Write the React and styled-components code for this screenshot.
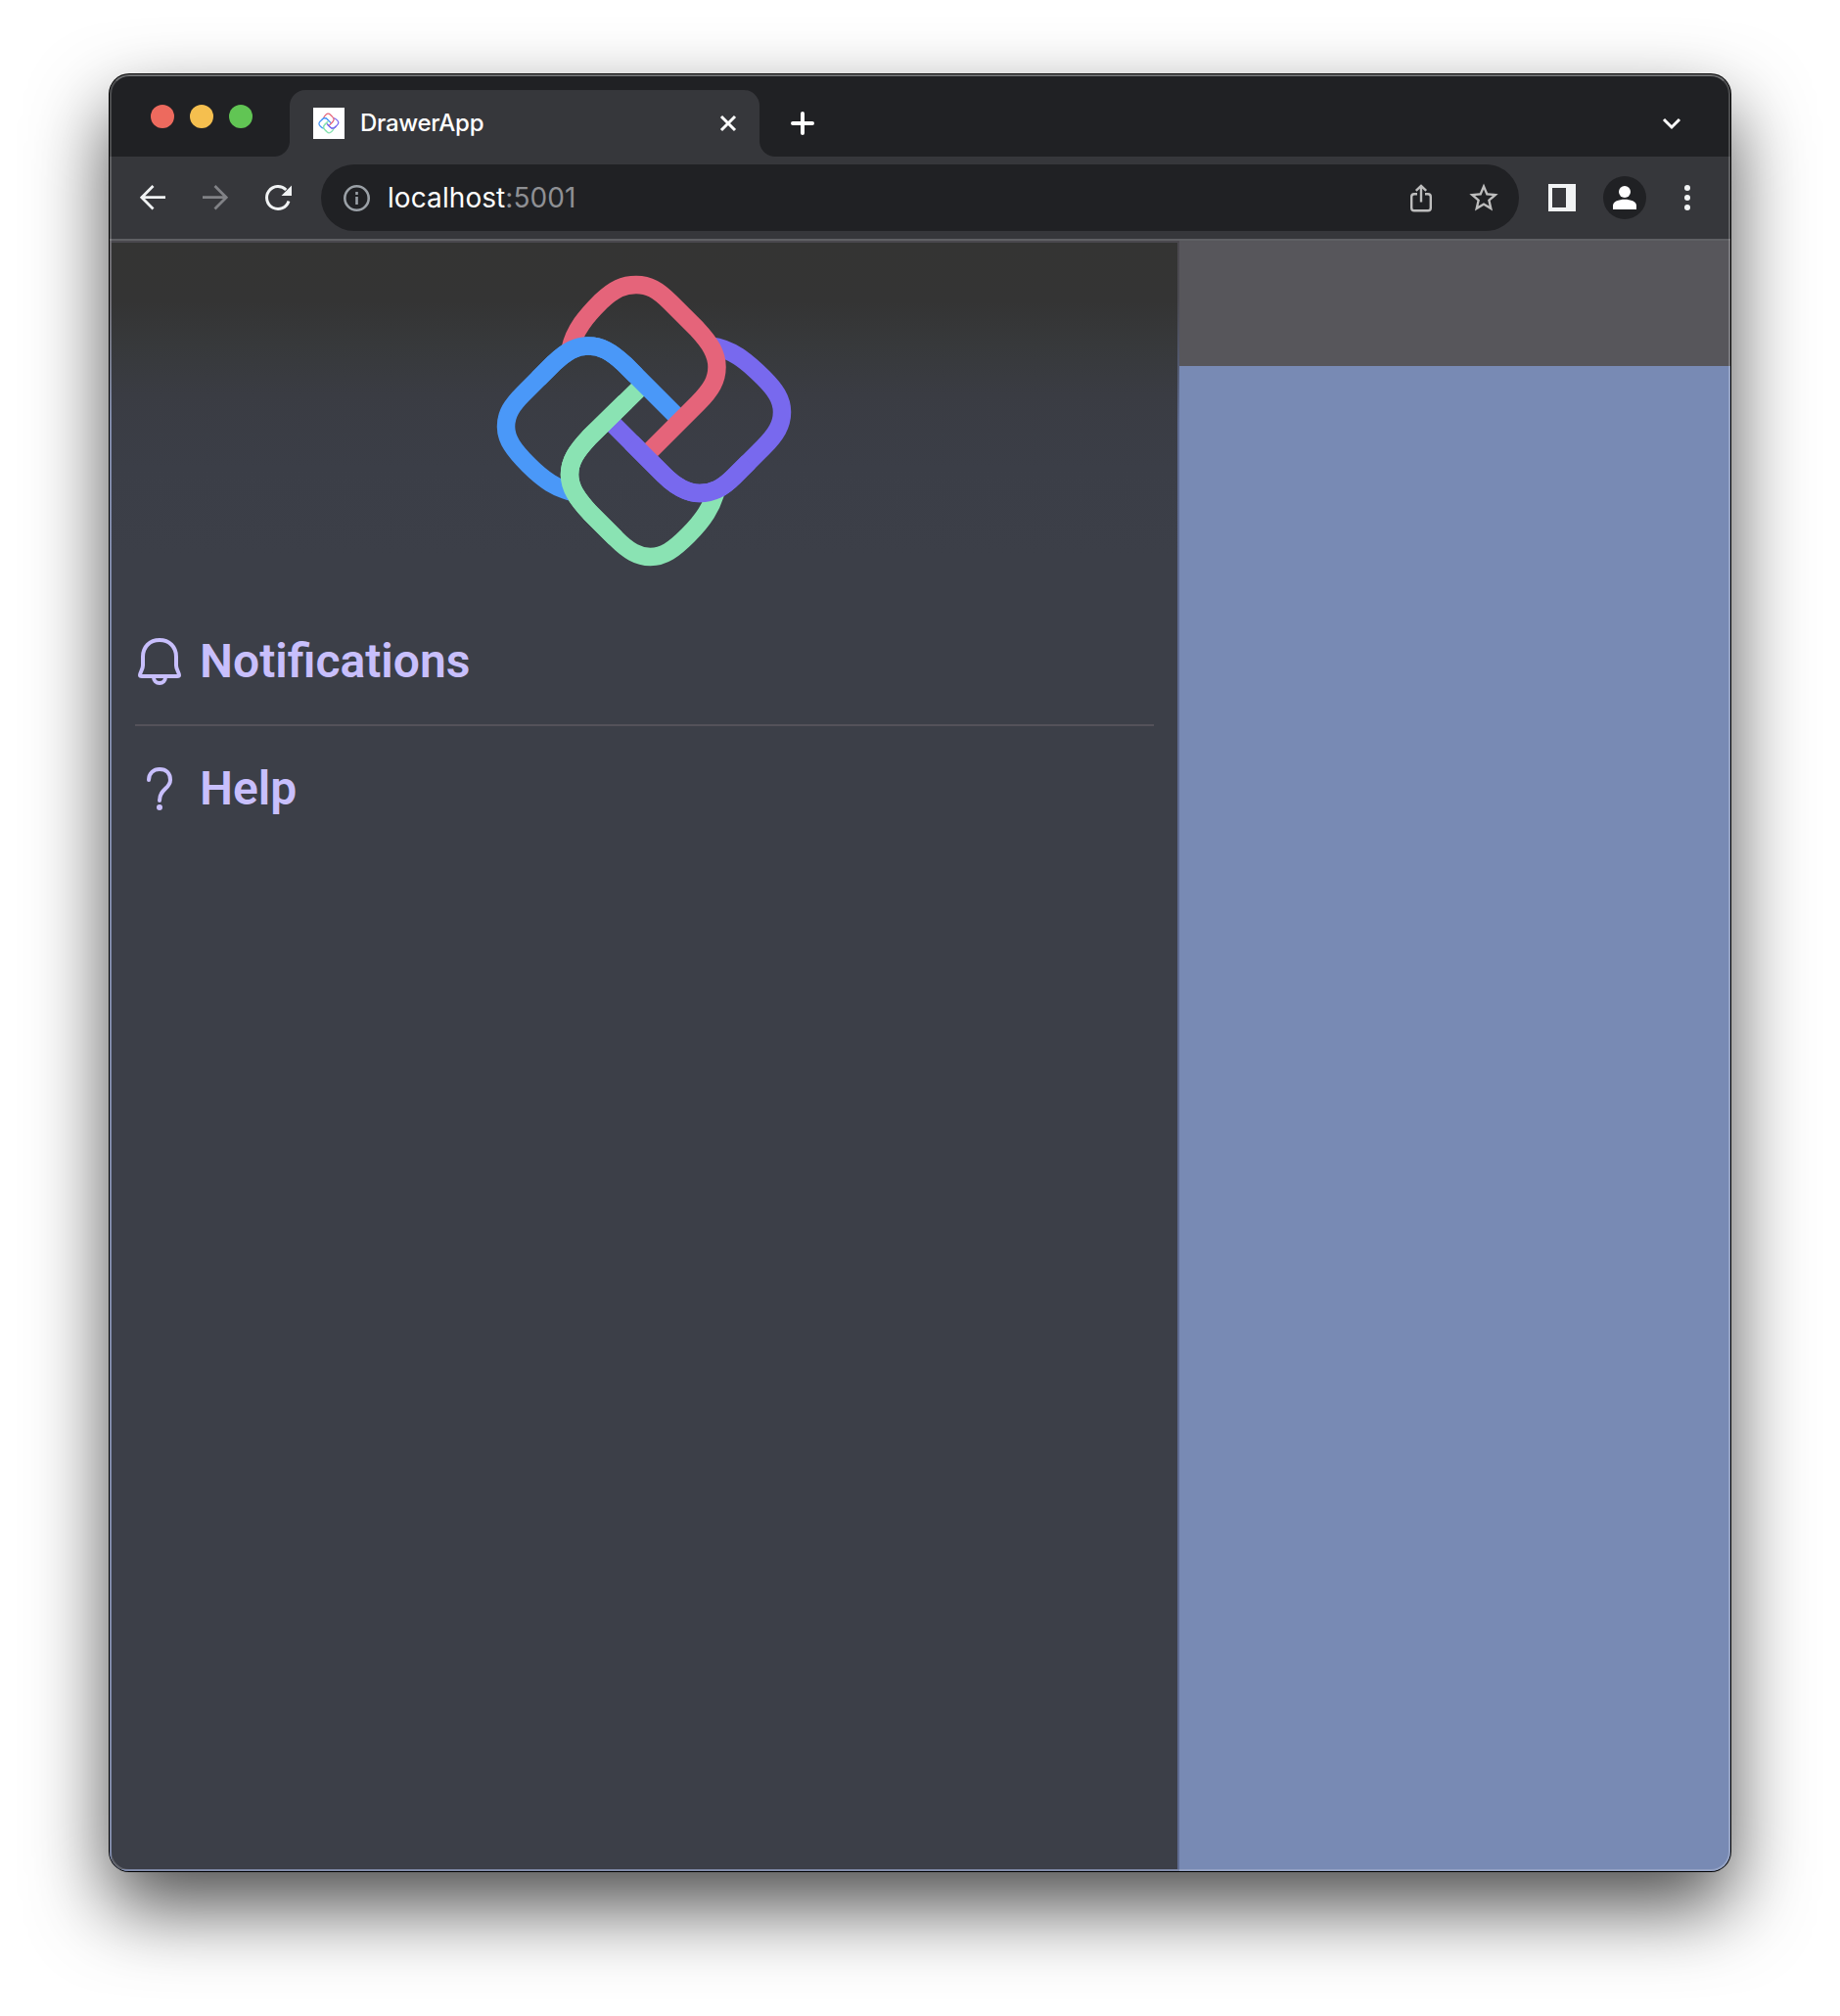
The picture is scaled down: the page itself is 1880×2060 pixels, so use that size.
import React from 'react';
import styled, { createGlobalStyle } from 'styled-components';

const Global = createGlobalStyle`
  *{box-sizing:border-box}
  body{margin:0;background:#fff;overflow:hidden}
`;
const Desktop = styled.main`
  width:1880px;height:2060px;padding:76px 112px 148px;background:#fff;
  font-family:Inter,sans-serif;
`;
const Frame = styled.div`
  position:relative;width:1656px;height:1836px;border-radius:20px;
  box-shadow:0 0 0 1px #000,0 36px 80px rgba(0,0,0,.7);
  display:flex;flex-direction:column;overflow:hidden;background:#36373b;
  &::after{content:'';position:absolute;inset:0;border:2px solid rgba(255,255,255,.2);border-top-color:rgba(255,255,255,.35);border-radius:20px;pointer-events:none}
`;
const TabStrip = styled.header`
  height:84px;flex:none;background:#202124;display:flex;align-items:flex-end;
`;
const Lights = styled.div`display:flex;gap:16px;width:184px;padding-left:42px;align-self:flex-start;padding-top:31px;`;
const Light = styled.i`width:24px;height:24px;border-radius:50%;background:${p => p.$color};`;
const Tab = styled.div`
  position:relative;width:480px;height:68px;background:#36373b;border-radius:16px 16px 0 0;
  display:flex;align-items:center;padding:0 23px 0 24px;color:#fff;
  &::before,&::after{content:'';position:absolute;bottom:0;width:16px;height:16px}
  &::before{right:100%;background:radial-gradient(circle at 0 0,transparent 15.5px,#36373b 16.5px)}
  &::after{left:100%;background:radial-gradient(circle at 100% 0,transparent 15.5px,#36373b 16.5px)}
`;
const Favicon = styled.span`width:32px;height:32px;background:#fff;display:flex;align-items:center;justify-content:center;`;
const TabTitle = styled.span`font-size:24px;font-weight:500;line-height:32px;margin-left:16px;flex:1;letter-spacing:-.28px;`;
const Icon = styled.svg`
  display:block;flex:none;width:${p => p.$w}px;height:${p => p.$h || p.$w}px;overflow:visible;
`;
const NewTab = styled.div`height:68px;width:88px;display:flex;align-items:center;justify-content:center;`;
const TabMenu = styled.div`margin-left:auto;height:68px;padding-right:51px;display:flex;align-items:center;`;
const Toolbar = styled.nav`
  height:86px;flex:none;border-bottom:2px solid #5f6064;display:flex;align-items:center;padding:0 28px;
`;
const NavButtons = styled.div`display:flex;gap:32px;width:188px;`;
const Address = styled.div`
  width:1224px;height:68px;border-radius:34px;background:#202124;display:flex;align-items:center;padding:0 20px 0 20px;
`;
const Url = styled.span`
  font-size:28px;line-height:36px;color:#fff;margin-left:16px;flex:1;letter-spacing:.08px;
  span{color:#8f9094}
`;
const AddressActions = styled.div`display:flex;gap:32px;`;
const Actions = styled.div`display:flex;align-items:center;gap:26px;margin-left:28px;`;
const Avatar = styled.div`width:44px;height:44px;border-radius:50%;background:#202124;display:flex;align-items:center;justify-content:center;`;
const Page = styled.section`flex:1;display:flex;background:#788ab4;`;
const Drawer = styled.aside`
  width:1093px;border:2px solid transparent;
  background:
    linear-gradient(180deg,#343433 0,#343434 60px,#37393b 105px,#3a3c43 155px,#3b3e47 230px,#3c3f48 320px) padding-box,
    linear-gradient(180deg,#4a484e 0,#4b4a51 60px,#535a70 125px,#5f6c92 185px) border-box;
  padding:12px 24px 0 24px;display:flex;flex-direction:column;
`;
const LogoBox = styled.div`display:flex;justify-content:center;height:351px;padding-left:2px;`;
const MenuItem = styled.a`
  height:${p => p.$last ? 128 : 131}px;padding-left:2px;display:flex;align-items:center;gap:18px;color:#c8bffc;
  font:600 48px/60px Roboto,sans-serif;
  border-bottom:${p => p.$last ? 0 : '2px solid #54525a'};
`;
const Content = styled.div`flex:1;`;
const AppBar = styled.div`height:128px;background:#57565b;`;

function Logo({ size = 340, thick = 18.5 }) {
  return (
    <Icon $w={size} viewBox="0 0 340 340" fill="none" strokeWidth={thick}>
      <path stroke="#7869ee" d="M236 93.500C257 96 273 109 290 126C302 138 309 148 309 161C309 174 303 184 290 197L260 227C248 239 238 244 225 244C212 244 201 238 188 225L137 174" />
      <path stroke="#8ae3b3" d="M242.500 238C238 258 228 272 213 287C198 302 188 309 174.500 309C162 309 152 303 139 290L113 264C99 249 92 238 92 225C92 211 99 201 112 187L164 136" />
      <path stroke="#4a98f8" d="M98 243.500C79 240 65 230 50 215C35 200 27 189 27 176C27 163 33 154 45 142L76 111C89 99 98 93.500 111 93.500C124 93.500 134 99 148 112L202 166" />
      <path stroke="#e5647a" d="M92.500 97C97 77 109 63 124 48C138 35 147 31 160 31C173 31 182 36 195 49L222 76C236 91 242.500 102 242.500 115C242.500 128 237 138 223 152L172 203" />
      <path stroke="#4a98f8" d="M60 127L76 111C89 99 98 93.500 111 93.500C124 93.500 134 99 148 112L160 124" />
      <path stroke="#7869ee" d="M275 212L260 227C248 239 238 244 225 244C212 244 201 238 188 225L155 192" />
      <path stroke="#8ae3b3" d="M139 290L113 264C99 249 92 238 92 225C92 211 99 201 112 187L149 150.500" />
    </Icon>
  );
}
const Arrow = ({ forward }) => (
  <Icon $w={32} viewBox="0 0 32 32" fill="none" stroke={forward ? '#818286' : '#f1f3f4'} strokeWidth="2.800">
    <path d={forward ? 'M3 15.700H28M15.500 4L27.200 15.700L15.500 27.400' : 'M29 15.700H4M16.500 4L4.800 15.700L16.500 27.400'} />
  </Icon>
);

export default function App() {
  return (
    <Desktop>
      <Global />
      <Frame>
        <TabStrip>
          <Lights>
            <Light $color="#ed6a5e" /><Light $color="#f5bf4f" /><Light $color="#61c554" />
          </Lights>
          <Tab>
            <Favicon><Logo size={24} thick={18} /></Favicon>
            <TabTitle>DrawerApp</TabTitle>
            <Icon $w={18} viewBox="0 0 18 18" stroke="#fff" strokeWidth="3"><path d="M2 2L16 16M16 2L2 16" /></Icon>
          </Tab>
          <NewTab>
            <Icon $w={24} viewBox="0 0 24 24" stroke="#fff" strokeWidth="4" strokeLinecap="round"><path d="M12 2V22M2 12H22" /></Icon>
          </NewTab>
          <TabMenu>
            <Icon $w={18} $h={12} viewBox="0 0 18 12" fill="none" stroke="#fff" strokeWidth="3"><path d="M1 2L9 10L17 2" /></Icon>
          </TabMenu>
        </TabStrip>
        <Toolbar>
          <NavButtons>
            <Arrow /><Arrow forward />
            <Icon $w={32} viewBox="0 0 32 32" fill="none" stroke="#f1f3f4" strokeWidth="3">
              <path d="M27 19.500A11.500 11.500 0 1 1 24.300 8" />
              <path d="M30 3.500V14H19.500Z" fill="#f1f3f4" stroke="none" />
            </Icon>
          </NavButtons>
          <Address>
            <Icon $w={32} viewBox="0 0 32 32" fill="none" stroke="#9aa0a6" strokeWidth="2.600">
              <circle cx="16.500" cy="16.500" r="12.200" /><path d="M16.500 15V23M16.500 10V13" />
            </Icon>
            <Url>localhost<span>:5001</span></Url>
            <AddressActions>
              <Icon $w={32} viewBox="0 0 32 32" fill="none" stroke="#bdbdbd" strokeWidth="2.400">
                <path d="M12 12.200H9Q6.200 12.200 6.200 15V26.500Q6.200 29.300 9 29.300H23Q25.800 29.300 25.800 26.500V15Q25.800 12.200 23 12.200H20M16 20.500V4M10.800 8.800L16 3.800L21.200 8.800" />
              </Icon>
              <Icon $w={32} viewBox="0 0 32 32" fill="#bdbdbd">
                <path transform="translate(-1.600 -1.400) scale(1.467)" d="M22 9.240l-7.190-.620L12 2 9.190 8.630 2 9.240l5.460 4.730L5.820 21 12 17.270 18.180 21l-1.630-7.030L22 9.240zM12 15.400l-3.760 2.270 1-4.280-3.320-2.880 4.380-.380L12 6.100l1.710 4.040 4.380.380-3.320 2.880 1 4.280L12 15.400z" />
              </Icon>
            </AddressActions>
          </Address>
          <Actions>
            <Icon $w={32} viewBox="0 0 32 32"><path fill="#f1f3f4" fillRule="evenodd" d="M2 2H30V30H2ZM6 6V26H20V6Z" /></Icon>
            <Avatar>
              <Icon $w={24} viewBox="0 0 24 24" fill="#fff"><circle cx="12" cy="6" r="6" /><path d="M0 24V20C0 11.500 24 11.500 24 20V24Z" /></Icon>
            </Avatar>
            <Icon $w={32} viewBox="0 0 32 32" fill="#f1f3f4"><circle cx="16" cy="6" r="3" /><circle cx="16" cy="16" r="3" /><circle cx="16" cy="26" r="3" /></Icon>
          </Actions>
        </Toolbar>
        <Page>
          <Drawer>
            <LogoBox><Logo /></LogoBox>
            <MenuItem>
              <Icon $w={46} $h={50} viewBox="0 0 46 50" fill="none" stroke="#c8bffc" strokeWidth="4" strokeLinejoin="round">
                <path d="M23 3C13 3 6 10 6 20V29C6 33 3 36 3 39C3 40 4 40 5 40H41C42 40 43 40 43 39C43 36 40 33 40 29V20C40 10 33 3 23 3ZM17 41A6 6 0 0 0 29 41" />
              </Icon>Notifications
            </MenuItem>
            <MenuItem $last>
              <Icon $w={46} $h={50} viewBox="0 0 46 50" fill="none" stroke="#c8bffc" strokeWidth="4" strokeLinecap="round">
                <path d="M12 16C12 9 17 5 23 5C30 5 34 9 34 16C34 25 23 25 23 37" /><circle cx="23" cy="44" r="3" fill="#c8bffc" stroke="none" />
              </Icon>Help
            </MenuItem>
          </Drawer>
          <Content><AppBar /></Content>
        </Page>
      </Frame>
    </Desktop>
  );
}
